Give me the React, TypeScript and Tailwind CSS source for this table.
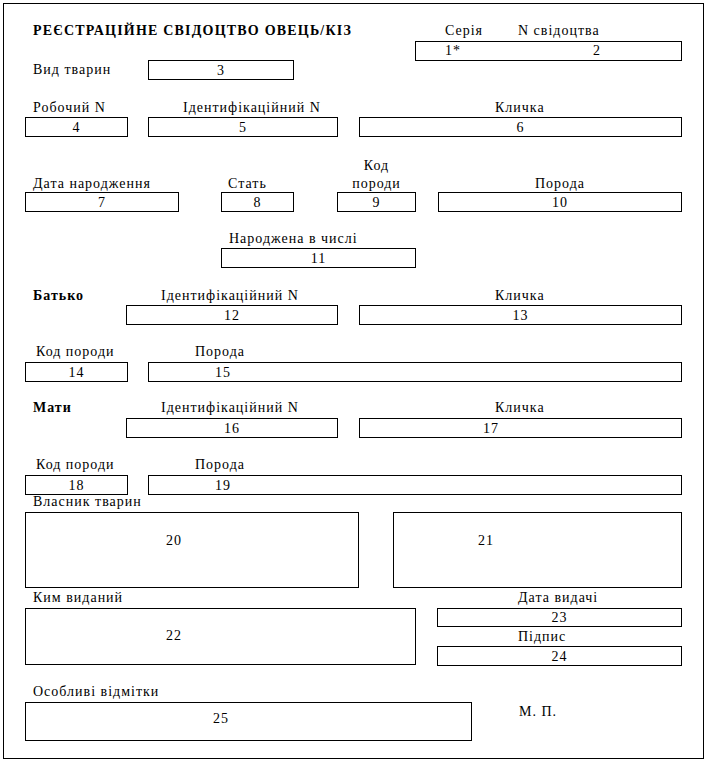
const box = "border border-black h-[20px] pt-[2px] leading-[16px] text-center";

export default function App() {
  return (
    <div className="bg-white min-h-[761px] pt-[3px] pl-[3px] text-black text-[14px] leading-[16px] tracking-[1px] font-['Liberation_Serif','Times_New_Roman',serif]">
      <div className="w-[701px] h-[756px] border border-black">
        {/* Title */}
        <div className="flex h-[18px] mt-[19px]">
          <div className="w-[441px] pl-[29px] font-bold tracking-[1.2px] whitespace-nowrap">
            РЕЄСТРАЦІЙНЕ СВІДОЦТВО ОВЕЦЬ/КІЗ
          </div>
          <div className="w-[73px]">Серія</div>
          <div>N свідоцтва</div>
        </div>
        <div className="flex h-[19px]">
          <div className="ml-[411px] w-[267px] h-[20px] border border-black pt-[1px] flex shrink-0">
            <span className="pl-[29px] w-[177px]">1*</span>
            <span>2</span>
          </div>
        </div>

        {/* Вид тварин */}
        <div className="flex items-start h-[40px]">
          <div className="ml-[29px] w-[115px] mt-[2px]">Вид тварин</div>
          <div className={`w-[146px] ${box}`}>3</div>
        </div>

        <div className="flex h-[17px]">
          <div className="ml-[29px] w-[150px]">Робочий N</div>
          <div className="w-[312px] whitespace-nowrap">Ідентифікаційний N</div>
          <div>Кличка</div>
        </div>
        <div className="flex h-[20px]">
          <div className={`ml-[21px] w-[103px] ${box}`}>4</div>
          <div className={`ml-[20px] w-[190px] ${box}`}>5</div>
          <div className={`ml-[21px] w-[323px] ${box}`}>6</div>
        </div>

        {/* Дата народження */}
        <div className="flex items-start h-[36px] mt-[19px]">
          <div className="ml-[29px] w-[195px] mt-[20px] whitespace-nowrap">Дата народження</div>
          <div className="w-[109px] mt-[20px]">Стать</div>
          <div className="w-[79px] text-center leading-[18px] mt-[1px]">
            Код
            <br />
            породи
          </div>
          <div className="ml-[119px] mt-[20px]">Порода</div>
        </div>
        <div className="flex h-[20px]">
          <div className={`ml-[21px] w-[154px] ${box}`}>7</div>
          <div className={`ml-[42px] w-[73px] ${box}`}>8</div>
          <div className={`ml-[43px] w-[79px] ${box}`}>9</div>
          <div className={`ml-[22px] w-[244px] ${box}`}>10</div>
        </div>

        <div className="h-[17px] mt-[19px] pl-[225px]">Народжена в числі</div>
        <div className="flex h-[20px]">
          <div className={`ml-[217px] w-[195px] ${box}`}>11</div>
        </div>

        {/* Батько */}
        <div className="flex h-[17px] mt-[20px]">
          <div className="ml-[29px] w-[128px] font-bold">Батько</div>
          <div className="w-[334px] whitespace-nowrap">Ідентифікаційний N</div>
          <div>Кличка</div>
        </div>
        <div className="flex h-[20px]">
          <div className={`ml-[122px] w-[212px] ${box}`}>12</div>
          <div className={`ml-[21px] w-[323px] ${box}`}>13</div>
        </div>
        <div className="flex h-[18px] mt-[19px]">
          <div className="ml-[32px] w-[159px]">Код породи</div>
          <div>Порода</div>
        </div>
        <div className="flex h-[20px]">
          <div className={`ml-[21px] w-[103px] ${box}`}>14</div>
          <div className="ml-[20px] w-[534px] h-[20px] border border-black pt-[2px] pl-[66px]">15</div>
        </div>

        {/* Мати */}
        <div className="flex h-[18px] mt-[18px]">
          <div className="ml-[29px] w-[128px] font-bold">Мати</div>
          <div className="w-[334px] whitespace-nowrap">Ідентифікаційний N</div>
          <div>Кличка</div>
        </div>
        <div className="flex h-[20px]">
          <div className={`ml-[122px] w-[212px] ${box}`}>16</div>
          <div className="ml-[21px] w-[323px] h-[20px] border border-black pt-[2px] pl-[123px]">17</div>
        </div>
        <div className="flex h-[18px] mt-[19px]">
          <div className="ml-[32px] w-[159px]">Код породи</div>
          <div>Порода</div>
        </div>
        <div className="flex h-[19px]">
          <div className={`ml-[21px] w-[103px] ${box}`}>18</div>
          <div className="ml-[20px] w-[534px] h-[20px] border border-black pt-[2px] pl-[66px]">19</div>
        </div>

        {/* Власник */}
        <div className="h-[18px] pl-[29px]">Власник тварин</div>
        <div className="flex h-[77px]">
          <div className="ml-[21px] w-[334px] h-[76px] border border-black pt-[20px] pl-[140px]">20</div>
          <div className="ml-[34px] w-[289px] h-[76px] border border-black pt-[20px] pl-[84px]">21</div>
        </div>

        {/* Ким виданий */}
        <div className="flex h-[18px] mt-[1px]">
          <div className="ml-[29px] w-[485px]">Ким виданий</div>
          <div>Дата видачі</div>
        </div>
        <div className="flex h-[57px]">
          <div className="ml-[21px] w-[391px] h-[57px] border border-black pt-[19px] pl-[140px]">22</div>
          <div className="ml-[21px] w-[245px] flex flex-col">
            <div className="h-[19px] border border-black pt-[1px] text-center">23</div>
            <div className="h-[16px] mt-[2px] pl-[81px]">Підпис</div>
            <div className="h-[20px] mt-[1px] border border-black pt-[2px] text-center">24</div>
          </div>
        </div>

        {/* Особливі відмітки */}
        <div className="h-[18px] mt-[19px] pl-[29px]">Особливі відмітки</div>
        <div className="flex items-start">
          <div className="ml-[21px] w-[447px] h-[39px] border border-black pt-[8px] pl-[187px]">25</div>
          <div className="ml-[47px] mt-[2px]">М. П.</div>
        </div>
      </div>
    </div>
  );
}
